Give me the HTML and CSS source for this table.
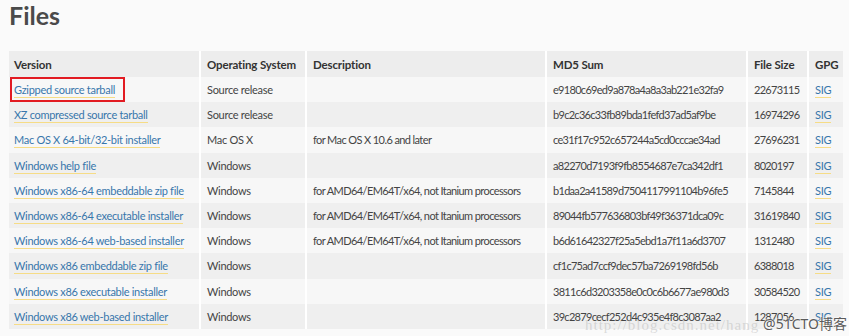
FILE: index.html
```html
<!DOCTYPE html>
<html lang="en">
<head>
    <meta charset="UTF-8">
    <title>Files</title>
    <link rel="stylesheet" href="styles.css">
</head>
<body>
    <h2 class="page-title">Files</h2>

    <table class="files-table">
        <colgroup>
            <col class="col-version">
            <col class="col-os">
            <col class="col-desc">
            <col class="col-md5">
            <col class="col-size">
            <col class="col-gpg">
        </colgroup>
        <thead>
            <tr>
                <th>Version</th>
                <th>Operating System</th>
                <th>Description</th>
                <th>MD5 Sum</th>
                <th>File Size</th>
                <th>GPG</th>
            </tr>
        </thead>
        <tbody>
            <tr>
                <td><span class="marked"><a href="#">Gzipped source tarball</a></span></td>
                <td>Source release</td>
                <td class="desc"></td>
                <td class="num">e9180c69ed9a878a4a8a3ab221e32fa9</td>
                <td class="num">22673115</td>
                <td><a href="#">SIG</a></td>
            </tr>
            <tr>
                <td><a href="#">XZ compressed source tarball</a></td>
                <td>Source release</td>
                <td class="desc"></td>
                <td class="num">b9c2c36c33fb89bda1fefd37ad5af9be</td>
                <td class="num">16974296</td>
                <td><a href="#">SIG</a></td>
            </tr>
            <tr>
                <td><a href="#">Mac OS X 64-bit/32-bit installer</a></td>
                <td>Mac OS X</td>
                <td class="desc">for Mac OS X 10.6 and later</td>
                <td class="num">ce31f17c952c657244a5cd0cccae34ad</td>
                <td class="num">27696231</td>
                <td><a href="#">SIG</a></td>
            </tr>
            <tr>
                <td><a href="#">Windows help file</a></td>
                <td>Windows</td>
                <td class="desc"></td>
                <td class="num">a82270d7193f9fb8554687e7ca342df1</td>
                <td class="num">8020197</td>
                <td><a href="#">SIG</a></td>
            </tr>
            <tr>
                <td><a href="#">Windows x86-64 embeddable zip file</a></td>
                <td>Windows</td>
                <td class="desc">for AMD64/EM64T/x64, not Itanium processors</td>
                <td class="num">b1daa2a41589d7504117991104b96fe5</td>
                <td class="num">7145844</td>
                <td><a href="#">SIG</a></td>
            </tr>
            <tr>
                <td><a href="#">Windows x86-64 executable installer</a></td>
                <td>Windows</td>
                <td class="desc">for AMD64/EM64T/x64, not Itanium processors</td>
                <td class="num">89044fb577636803bf49f36371dca09c</td>
                <td class="num">31619840</td>
                <td><a href="#">SIG</a></td>
            </tr>
            <tr>
                <td><a href="#">Windows x86-64 web-based installer</a></td>
                <td>Windows</td>
                <td class="desc">for AMD64/EM64T/x64, not Itanium processors</td>
                <td class="num">b6d61642327f25a5ebd1a7f11a6d3707</td>
                <td class="num">1312480</td>
                <td><a href="#">SIG</a></td>
            </tr>
            <tr>
                <td><a href="#">Windows x86 embeddable zip file</a></td>
                <td>Windows</td>
                <td class="desc"></td>
                <td class="num">cf1c75ad7ccf9dec57ba7269198fd56b</td>
                <td class="num">6388018</td>
                <td><a href="#">SIG</a></td>
            </tr>
            <tr>
                <td><a href="#">Windows x86 executable installer</a></td>
                <td>Windows</td>
                <td class="desc"></td>
                <td class="num">3811c6d3203358e0c0c6b6677ae980d3</td>
                <td class="num">30584520</td>
                <td><a href="#">SIG</a></td>
            </tr>
            <tr>
                <td><a href="#">Windows x86 web-based installer</a></td>
                <td>Windows</td>
                <td class="desc"></td>
                <td class="num">39c2879cecf252d4c935e4f8c3087aa2</td>
                <td class="num">1287056</td>
                <td><a href="#">SIG</a></td>
            </tr>
        </tbody>
    </table>

    <!-- watermarks from the original screenshot -->
    <div class="watermark-url">http://blog.csdn.net/hang</div>
    <div class="watermark-site">@51CTO博客</div>
</body>
</html>
```

FILE: styles.css
```css
* {
    margin: 0;
    padding: 0;
    box-sizing: border-box;
}

body {
    background-color: #fafafa;
    color: #444;
    font-family: 'Lato', 'Noto Sans', sans-serif;
    font-size: 11px;
    letter-spacing: -0.3px;
    padding: 0 6px 0 9px;
    position: relative;
    height: 336px;
    overflow: hidden;
}

.page-title {
    font-size: 25px;
    font-weight: 700;
    color: #4a4a4a;
    letter-spacing: 0;
    line-height: 30px;
    height: 51px;
}

.files-table {
    width: 834px;
    border-collapse: collapse;
    table-layout: fixed;
}

.col-version { width: 191px; }
.col-os { width: 106px; }
.col-desc { width: 240px; }
.col-md5 { width: 201px; }
.col-size { width: 61px; }
.col-gpg { width: 35px; }

.files-table th,
.files-table td {
    text-align: left;
    white-space: nowrap;
    overflow: hidden;
    border-right: 2px solid #fff;
    padding: 0 5px 0 6px;
    line-height: 17px;
}

.files-table th:first-child,
.files-table td:first-child {
    padding-left: 5px;
}

.files-table th:last-child,
.files-table td:last-child {
    border-right: none;
}

.files-table th {
    background-color: #ededed;
    font-size: 11.5px;
    letter-spacing: -0.15px;
    font-weight: 700;
    color: #333;
    height: 26px;
}

.files-table td {
    height: 25.2px;
}

/* digits in this face are wider than the original's */
.files-table td.num {
    letter-spacing: -0.7px;
}

.files-table td.desc {
    letter-spacing: -0.6px;
}

.files-table tbody tr:nth-child(odd) td {
    background-color: #f7f7f7;
}

.files-table tbody tr:nth-child(even) td {
    background-color: #efefef;
}

.files-table a {
    color: #3776ab;
    text-decoration: none;
    border-bottom: 1px solid #f6dc86;
    padding-bottom: 1px;
}

/* red box drawn around the first link */
.marked {
    display: inline-block;
    border: 2px solid #e21b22;
    margin-left: -4px;
    padding: 3px 8px 2px 2px;
    line-height: 16px;
}

.watermark-url {
    position: absolute;
    left: 585px;
    top: 317px;
    font-family: 'Liberation Serif', serif;
    font-size: 15px;
    color: rgba(170, 170, 170, 0.4);
    letter-spacing: 1px;
}

.watermark-site {
    position: absolute;
    right: 2px;
    top: 313px;
    font-family: 'Noto Sans', 'Noto Sans CJK SC', sans-serif;
    font-size: 14px;
    letter-spacing: 0;
    color: #5a5a5a;
    text-shadow: 0 0 2px #fff, 0 0 2px #fff;
}
```
